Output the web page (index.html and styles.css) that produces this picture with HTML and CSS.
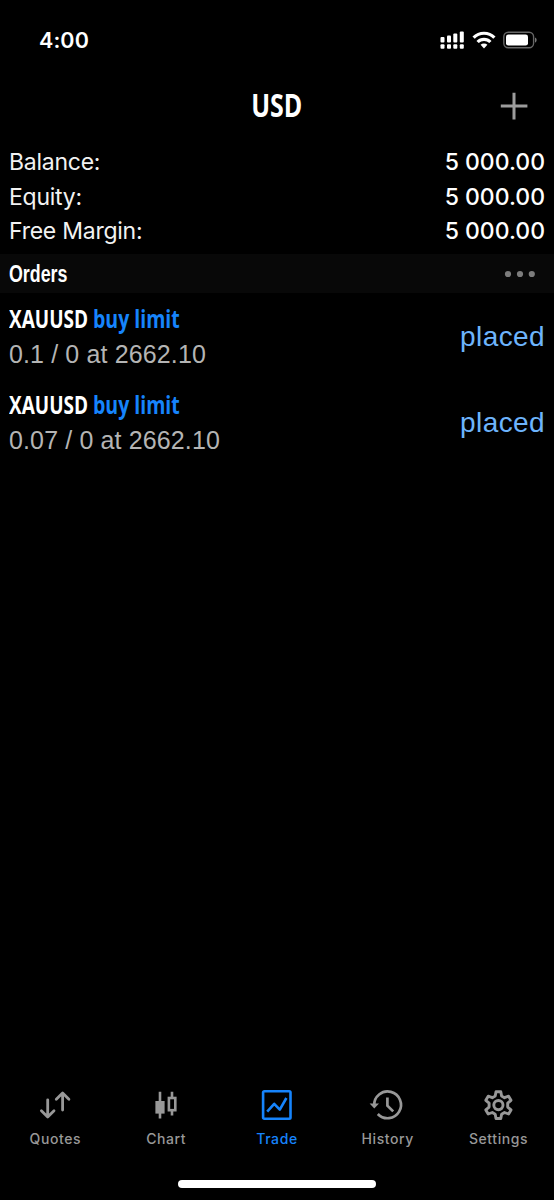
FILE: index.html
```html
<!DOCTYPE html>
<html lang="en">
  <head>
    <meta charset="UTF-8" />
    <meta name="viewport" content="width=device-width, initial-scale=1.0" />
    <title>Trade</title>
    <link rel="stylesheet" href="styles.css">
  </head>
  <body>

    <div class="status-bar">
        <span class="time">4:00</span>
        <div class="status-icons">
            <svg width="24" height="18" viewBox="0 0 24 18" fill="#fff">
                <rect x="0.5" y="6" width="4" height="5.5" rx="1"/>
                <rect x="7" y="4.5" width="4" height="7" rx="1"/>
                <rect x="13.3" y="2.5" width="4" height="9" rx="1"/>
                <rect x="19.8" y="0.5" width="4" height="11" rx="1"/>
                <rect x="0.5" y="13.2" width="4" height="4.6" rx="1"/>
                <rect x="7" y="13.2" width="4" height="4.6" rx="1"/>
                <rect x="13.3" y="13.2" width="4" height="4.6" rx="1"/>
                <rect x="19.8" y="13.2" width="4" height="4.6" rx="1"/>
            </svg>
            <svg class="wifi" width="24" height="18" viewBox="0 0 24 18" fill="none" stroke="#fff" stroke-width="3.2">
                <path d="M1.6 6.6a14.6 14.6 0 0 1 20.8 0"/>
                <path d="M5.6 11a9 9 0 0 1 12.8 0"/>
                <path d="M12 17.4l-3.4-3.6a4.8 4.8 0 0 1 6.8 0z" fill="#fff" stroke="none"/>
            </svg>
            <svg class="battery" width="34" height="18" viewBox="0 0 34 18">
                <rect x="0.8" y="1.2" width="29.8" height="15.6" rx="4.5" fill="none" stroke="#666" stroke-width="1.4"/>
                <rect x="3" y="3.4" width="22" height="11.2" rx="2.4" fill="#fff"/>
                <path d="M32 6.4c2.2.8 2.2 4.4 0 5.2z" fill="#777"/>
            </svg>
        </div>
    </div>

    <header class="navbar">
        <h1><span>USD</span></h1>
        <svg class="plus" width="28" height="28" viewBox="0 0 28 28" stroke="#9c9c9c" stroke-width="3">
            <path d="M14 .8v26.6M.8 14h26.6"/>
        </svg>
    </header>

    <div class="account">
        <div class="row"><span>Balance:</span><span class="value">5 000.00</span></div>
        <div class="row"><span>Equity:</span><span class="value">5 000.00</span></div>
        <div class="row"><span>Free Margin:</span><span class="value">5 000.00</span></div>
    </div>

    <div class="orders-title">
        <h2>Orders</h2>
        <svg width="32" height="8" viewBox="0 0 32 8" fill="#7c7c7c">
            <circle cx="4" cy="4" r="3.1"/>
            <circle cx="16" cy="4" r="3.1"/>
            <circle cx="27.8" cy="4" r="3.1"/>
        </svg>
    </div>

    <!-- orders -->
    <div class="orders">
        <div class="order">
            <div>
                <div class="name"><span class="symbol">XAUUSD</span><span class="type">buy limit</span></div>
                <div class="volume">0.1 / 0 at 2662.10</div>
            </div>
            <span class="state">placed</span>
        </div>
        <div class="order">
            <div>
                <div class="name"><span class="symbol">XAUUSD</span><span class="type">buy limit</span></div>
                <div class="volume">0.07 / 0 at 2662.10</div>
            </div>
            <span class="state">placed</span>
        </div>
    </div>

    <!-- bottom tabs -->
    <nav class="tabs">
        <div class="tab">
            <svg width="32" height="32" viewBox="0 0 32 32" fill="none" stroke="currentColor" stroke-width="2.8" stroke-linecap="round" stroke-linejoin="round">
                <path d="M8.7 10.8v17M2.4 21.8l6.3 6.2 6.3-6.2"/>
                <path d="M23.6 21V4.2M17.3 10.3l6.3-6.2 6.3 6.2"/>
            </svg>
            <span>Quotes</span>
        </div>
        <div class="tab">
            <svg width="32" height="32" viewBox="0 0 32 32" fill="none" stroke="currentColor" stroke-width="2.6">
                <path d="M10 2.8v26.6M22 2.8v5.4M22 22v4.4"/>
                <rect x="5.4" y="12" width="9.2" height="12.6" fill="currentColor" stroke="none"/>
                <rect x="18.9" y="9" width="6.4" height="12.2"/>
            </svg>
            <span>Chart</span>
        </div>
        <div class="tab active">
            <svg width="32" height="32" viewBox="0 0 32 32" fill="none" stroke="currentColor" stroke-width="2.6" stroke-linejoin="round">
                <rect x="2.1" y="2.3" width="27.4" height="27.4" rx="1.2"/>
                <path d="M6.2 22.6l7-7.8 5.6 5.8 6.6-11.6"/>
            </svg>
            <span>Trade</span>
        </div>
        <div class="tab">
            <svg width="32" height="32" viewBox="2 -0.4 32 32" fill="none" stroke="currentColor" stroke-width="2.7" overflow="visible">
                <path d="M4.2 16a13.4 13.4 0 1 1 3.6 8.6"/>
                <path d="M-.4 14h9.4l-4.7 5z" fill="currentColor" stroke="none"/>
                <path d="M17.4 8v8.2l5.8 5.8"/>
            </svg>
            <span>History</span>
        </div>
        <div class="tab">
            <svg width="32" height="32" viewBox="0.6 -0.2 32 32" fill="none" stroke="currentColor" stroke-width="2.9" stroke-linejoin="round">
                <path d="M13.6 2.5h4.8l.8 4.3 2.9 1.7 4.1-1.5 2.4 4.1-3.3 2.8v4l3.3 2.8-2.4 4.1-4.1-1.5-2.9 1.7-.8 4.3h-4.8l-.8-4.3-2.9-1.7-4.1 1.5-2.4-4.1 3.3-2.8v-4l-3.3-2.8 2.4-4.1 4.1 1.5 2.9-1.7z"/>
                <circle cx="16" cy="15.9" r="4.6"/>
            </svg>
            <span>Settings</span>
        </div>
    </nav>
    <div class="home-line"></div>

  </body>
</html>
```
FILE: styles.css
```css
*{
    padding: 0px;
    margin: 0px;
    box-sizing: border-box;
}
body{
    height: 1200px;
    background-color: #000;
    color: #fff;
    font-family: Inter, sans-serif;
    display: flex;
    flex-direction: column;
    overflow: hidden;
}
svg{
    display: block;
}

.status-bar{
    height: 80px;
    padding: 0 17px 0 39px;
    display: flex;
    align-items: center;
    justify-content: space-between;
}
.time{
    font-size: 21.5px;
    font-weight: 600;
    letter-spacing: 0.1px;
}
.status-icons{
    display: flex;
}
.wifi{
    margin-left: 8px;
}
.battery{
    margin-left: 7px;
}

.navbar{
    height: 52px;
    padding: 0 26px;
    display: grid;
    grid-template-columns: 28px 1fr 28px;
    align-items: center;
}
.navbar h1{
    grid-column: 2;
    text-align: center;
    font-family: "Open Sans", sans-serif;
    font-size: 32px;
    line-height: 50px;
    height: 52px;
    font-weight: 700;
}
.navbar h1 span{
    display: inline-block;
    transform: scaleX(0.78);
}

.account{
    padding: 13px 9px 0;
    height: 122px;
}
.row{
    height: 34.5px;
    line-height: 35px;
    display: flex;
    justify-content: space-between;
    font-size: 23px;
    letter-spacing: -0.25px;
    color: #f2f2f2;
}
.value{
    color: #fff;
    font-weight: 450;
    letter-spacing: 0;
}

.orders-title{
    height: 39px;
    padding: 0 18px 0 9px;
    background-color: #080808;
    display: flex;
    align-items: center;
    justify-content: space-between;
}
.orders-title h2{
    font-family: "Liberation Sans", sans-serif;
    font-size: 23px;
    line-height: 37px;
    padding-top: 2px;
    transform: scaleX(0.775);
    transform-origin: left;
}

.order{
    height: 86px;
    padding: 8px 9px 0;
    display: flex;
    justify-content: space-between;
}
.name{
    height: 36px;
    line-height: 34px;
    display: flex;
    font-family: "Open Sans", sans-serif;
    font-size: 25px;
    font-weight: 700;
}
/* squeezed to look condensed */
.name span{
    transform: scaleX(0.76);
    transform-origin: left;
}
.symbol{
    width: 84px;
}
.name .type{
    color: #1684fc;
    white-space: nowrap;
    transform: scaleX(0.78);
}
.volume{
    font-family: "Liberation Sans", sans-serif;
    font-size: 25px;
    line-height: 34px;
    letter-spacing: 0.13px;
    color: #b4b4b4;
}
.state{
    font-family: "Liberation Sans", sans-serif;
    font-size: 28px;
    line-height: 72px;
    letter-spacing: 0.4px;
    color: #6db4fc;
}

.tabs{
    margin-top: auto;
    height: 111px;
    display: flex;
}
.tab{
    flex: 1;
    display: flex;
    flex-direction: column;
    align-items: center;
    color: #989898;
}
.tab span{
    margin-top: 8px;
    font-size: 14px;
    font-weight: 450;
    line-height: 20px;
    letter-spacing: 0.6px;
}
.tab.active{
    color: #1684fc;
}
.home-line{
    width: 198px;
    height: 8px;
    margin: -20px auto 12px;
    background-color: #fff;
    border-radius: 4px;
}
```
